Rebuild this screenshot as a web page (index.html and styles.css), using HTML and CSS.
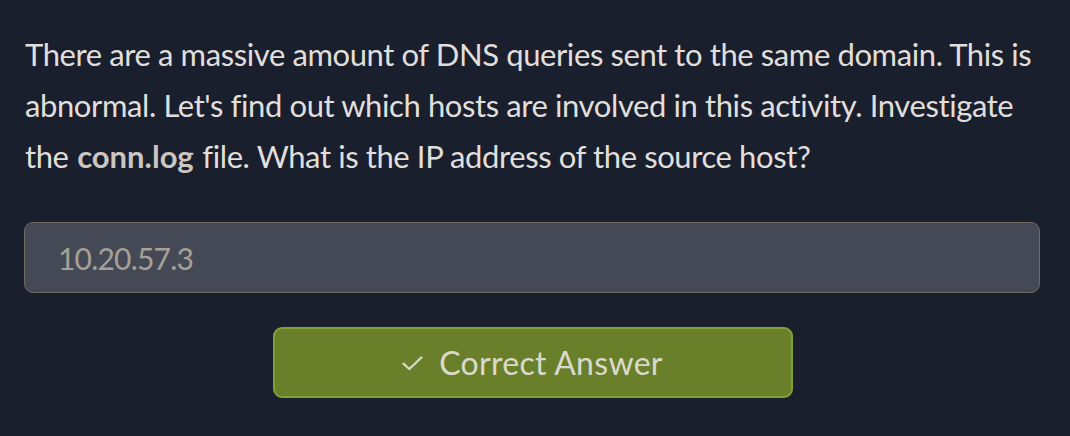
FILE: index.html
```html
<!DOCTYPE html>
<html lang="en">
<head>
<meta charset="utf-8">
<title>Question</title>
<link rel="stylesheet" href="styles.css">
</head>
<body>
<main class="task">
  <p class="question">There are a massive amount of DNS queries sent to the same domain. This is abnormal. Let's find out which hosts are involved in this activity. Investigate the <strong>conn.log</strong> file. What is the IP address of the source host?</p>
  <div class="answer-field">10.20.57.3</div>
  <div class="actions">
    <button class="btn-correct" type="button">
      <svg class="check" width="21" height="15" viewBox="0 0 21 15" aria-hidden="true"><path d="M1.5 7.6 L7.3 13 L19.5 1.4" fill="none" stroke="currentColor" stroke-width="2.2" stroke-linecap="round" stroke-linejoin="round"/></svg>
      <span>Correct Answer</span>
    </button>
  </div>
</main>
</body>
</html>
```
FILE: styles.css
```css
html, body {
  margin: 0;
  padding: 0;
  background: #1a1f2e;
}
body {
  width: 1070px;
  height: 436px;
  overflow: hidden;
  font-family: Lato, "Noto Sans", sans-serif;
}
.task {
  padding: 29px 30px 0 25px;
  display: flex;
  flex-direction: column;
}
.question {
  margin: 0;
  color: #e1dfdb;
  font-size: 31px;
  line-height: 51px;
  letter-spacing: -0.4px;
}
.question strong {
  font-weight: 700;
  color: #cbc6c0;
  letter-spacing: 0;
  margin: 0 1px;
}
.answer-field {
  margin-top: 40px;
  margin-left: -1px;
  height: 71px;
  box-sizing: border-box;
  border: 1.5px solid #6f6b62;
  border-radius: 9px;
  background: #454955;
  color: #a6a197;
  font-size: 30px;
  letter-spacing: -0.8px;
  display: flex;
  align-items: center;
  padding-left: 33px;
}
.actions {
  display: flex;
  justify-content: center;
  margin-top: 34px;
}
.btn-correct {
  width: 520px;
  height: 71px;
  box-sizing: border-box;
  background: #6a7f2a;
  border: 2px solid #7ea334;
  border-radius: 9px;
  color: #d9dacb;
  font-family: Lato, "Noto Sans", sans-serif;
  font-size: 32px;
  letter-spacing: 0.3px;
  display: flex;
  align-items: center;
  justify-content: center;
  gap: 16px;
  padding: 0;
}
.check {
  display: block;
  margin-top: 1px;
}
```
